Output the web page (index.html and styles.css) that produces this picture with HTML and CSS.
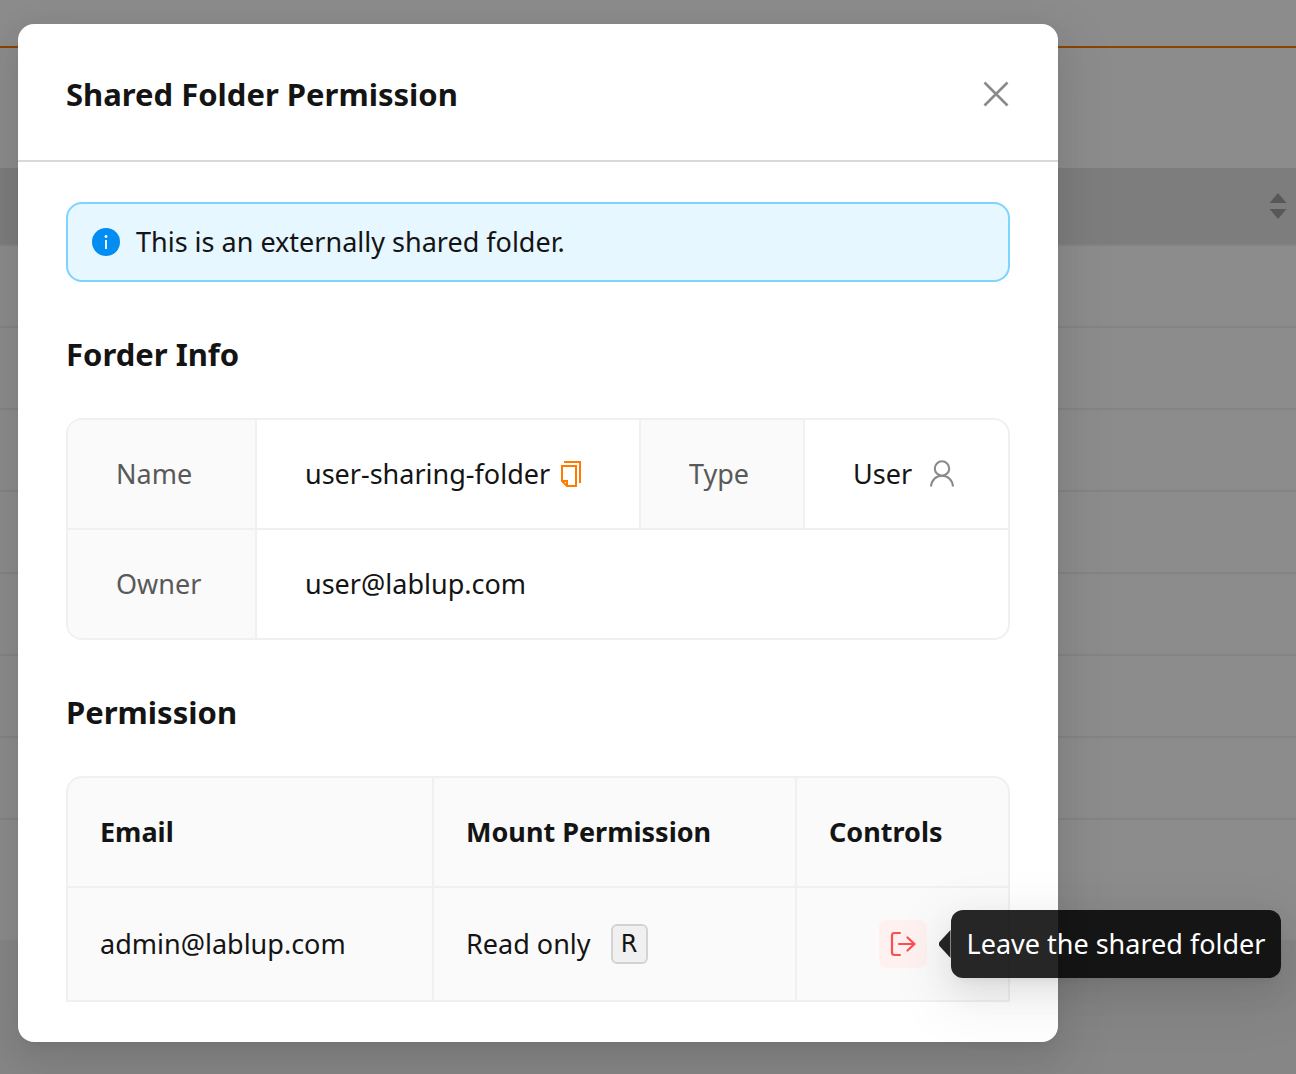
FILE: index.html
```html
<!DOCTYPE html>
<html lang="en">
<head>
<meta charset="utf-8">
<meta name="viewport" content="width=device-width, initial-scale=1">
<title>Shared Folder Permission</title>
<link rel="stylesheet" href="styles.css">
</head>
<body>
<div class="page" aria-hidden="true">
  <div class="page-tabs"></div>
  <div class="page-toolbar"></div>
  <div class="grid-head">
    <svg class="sorter" viewBox="0 0 18 26"><path d="M9 0 17.500 10H.5zM9 26 17.500 16H.5z" fill="#a0a0a0"/></svg>
  </div>
  <div class="grid-row"></div>
  <div class="grid-row"></div>
  <div class="grid-row"></div>
  <div class="grid-row"></div>
  <div class="grid-row"></div>
  <div class="grid-row"></div>
  <div class="grid-row"></div>
  <div class="grid-end"></div>
</div>
<div class="mask">
  <section class="modal" role="dialog" aria-labelledby="modal-title">
    <header class="modal-head">
      <h1 class="title" id="modal-title">Shared Folder Permission</h1>
      <button class="close" type="button" aria-label="Close">
        <svg viewBox="0 0 28 28" width="28" height="28"><path d="M2.500 2.500 25.500 25.500M25.500 2.500 2.500 25.500" fill="none" stroke="#8a8a8a" stroke-width="2.600"/></svg>
      </button>
    </header>
    <div class="modal-body">
      <div class="alert" role="alert">
        <svg viewBox="0 0 28 28" width="28" height="28"><circle cx="14" cy="14" r="14" fill="#028df2"/><circle cx="14" cy="8.500" r="1.400" fill="#fff"/><path d="M14 12v9" stroke="#fff" stroke-width="1.800"/></svg>
        <span>This is an externally shared folder.</span>
      </div>

      <h2 class="title section-title">Forder Info</h2>
      <div class="frame">
        <table class="info">
          <colgroup><col class="info-label"><col class="info-wide"><col class="info-label-2"><col></colgroup>
          <tr>
            <th scope="row">Name</th>
            <td><span class="inline name">user-sharing-folder
              <button class="copy" type="button" aria-label="Copy">
                <svg viewBox="0 0 22 28" width="22" height="28"><path d="M4 2H20V23" fill="none" stroke="#ff7a00" stroke-width="2"/><path d="M2 6H16V26H7L2 21z" fill="none" stroke="#ff7a00" stroke-width="2"/><path d="M2 21H7V26" fill="none" stroke="#ff7a00" stroke-width="2"/></svg>
              </button></span></td>
            <th scope="row">Type</th>
            <td><span class="inline user">User
              <svg viewBox="0 0 28 28" width="28" height="28"><g fill="none" stroke="#8a8a8a" stroke-width="2.100"><circle cx="14" cy="8.500" r="7.200"/><path d="M3 26.500C3.500 20 8 15.700 14 15.700S24.500 20 25 26.500"/></g></svg></span></td>
          </tr>
          <tr>
            <th scope="row">Owner</th>
            <td colspan="3">user@lablup.com</td>
          </tr>
        </table>
      </div>

      <h2 class="title section-title">Permission</h2>
      <div class="frame frame-open">
        <table class="perm">
          <colgroup><col class="perm-email"><col class="perm-mount"><col></colgroup>
          <thead>
            <tr><th scope="col">Email</th><th scope="col">Mount Permission</th><th scope="col">Controls</th></tr>
          </thead>
          <tbody>
            <tr>
              <td>admin@lablup.com</td>
              <td><span class="inline access">Read only <kbd class="key">R</kbd></span></td>
              <td>
                <div class="control">
                  <button class="leave" type="button" aria-label="Leave" aria-describedby="leave-tip">
                    <svg viewBox="0 0 26 26" width="26" height="26"><path d="M10 2H4.500Q2 2 2 4.500V21.500Q2 24 4.500 24H10M9 13H24.500M17.500 6.500 24.500 13 17.500 19.500" fill="none" stroke="#ff4d4f" stroke-width="2.200" stroke-linecap="round" stroke-linejoin="round"/></svg>
                  </button>
                  <div class="tip" id="leave-tip" role="tooltip">Leave the shared folder</div>
                </div>
              </td>
            </tr>
          </tbody>
        </table>
      </div>
    </div>
  </section>
</div>
</body>
</html>
```
FILE: styles.css
```css
* { box-sizing: border-box; }

body {
  margin: 0;
  min-height: 100vh;
  position: relative;
  overflow-x: hidden;
  font-family: "Noto Sans", "Open Sans", sans-serif;
  font-size: 27px;
  line-height: 44px;
  color: #141414;
  background: #f4f4f4;
}

button {
  display: flex;
  align-items: center;
  justify-content: center;
  padding: 0;
  border: 0;
  background: none;
  cursor: pointer;
}

svg { display: block; flex: none; }

/* Page behind the dialog */
.page {
  position: absolute;
  inset: 0;
  overflow: hidden;
}
.page-tabs { height: 48px; background: #fff; border-bottom: 2px solid #ff7a00; }
.page-toolbar { height: 120px; background: #fff; }
.grid-head {
  display: flex;
  align-items: center;
  justify-content: flex-end;
  height: 78px;
  padding-right: 9px;
  background: #e4e4e4;
  border-bottom: 2px solid #eee;
}
.sorter { width: 18px; height: 26px; }
.grid-row { height: 82px; background: #fff; border-bottom: 2px solid #f0f0f0; }
.grid-end { height: 120px; background: #fff; }

/* Dialog */
.mask {
  position: relative;
  min-height: 100vh;
  padding: 24px 18px 32px;
  background: rgba(0, 0, 0, .45);
}
.modal {
  max-width: 1040px;
  border-radius: 16px;
  background: #fff;
  box-shadow: 0 12px 32px rgba(0, 0, 0, .08), 0 6px 12px -8px rgba(0, 0, 0, .12), 0 18px 56px 16px rgba(0, 0, 0, .05);
}
.modal-head {
  display: flex;
  align-items: center;
  justify-content: space-between;
  height: 138px;
  padding: 4px 48px 0;
  border-bottom: 2px solid #d9d9d9;
}
.title {
  margin: 0;
  font-size: 31px;
  line-height: 40px;
  font-weight: 700;
}
.close { width: 28px; height: 28px; }
.modal-body { padding: 40px 48px; }

.alert {
  display: flex;
  align-items: center;
  gap: 16px;
  padding: 16px 24px;
  border: 2px solid #7cd4ff;
  border-radius: 16px;
  background: #e6f7ff;
}
.section-title { margin: 52px 0 44px; }

.frame {
  border: 2px solid #f0f0f0;
  border-radius: 16px;
  overflow: hidden;
}
.frame-open {
  border-radius: 16px 16px 0 0;
  background: #fafafa;
  overflow: visible;
}

table {
  width: 100%;
  table-layout: fixed;
  border-spacing: 0;
}
th, td {
  text-align: left;
  white-space: nowrap;
  border-right: 2px solid #f0f0f0;
}
th:last-child, td:last-child { border-right: 0; }

.info th, .info td { height: 108px; padding: 0 48px; }
.info tr:first-child > * { height: 110px; border-bottom: 2px solid #f0f0f0; }
.info th { font-weight: 400; color: #595959; background: #fafafa; }
.info-label { width: 189px; }
.info-wide { width: 384px; }
.info-label-2 { width: 164px; }

.perm th, .perm td { padding: 0 32px; }
.perm th { height: 110px; border-bottom: 2px solid #f0f0f0; }
.perm td { height: 112px; }
.perm-email { width: 366px; }
.perm-mount { width: 363px; }

.inline { display: flex; align-items: center; }
.name { gap: 10px; }
.user { gap: 16px; }
.access { gap: 20px; }
.copy { flex: none; }

.key {
  display: flex;
  align-items: center;
  justify-content: center;
  width: 37px;
  height: 40px;
  border: 2px solid #d3d3d3;
  border-radius: 6px;
  background: #f0f0f0;
  font: 24px/36px "DejaVu Sans", sans-serif;
}

.control {
  position: relative;
  width: 48px;
  margin: 0 auto;
}
.leave {
  width: 48px;
  height: 48px;
  border-radius: 8px;
  background: #fff1f0;
}
.tip {
  position: absolute;
  top: -10px;
  left: calc(100% + 24px);
  padding: 12px 16px;
  border-radius: 12px;
  background: rgba(0, 0, 0, .85);
  color: #fff;
  box-shadow: 0 12px 32px rgba(0, 0, 0, .08), 0 6px 12px -8px rgba(0, 0, 0, .12), 0 18px 56px 16px rgba(0, 0, 0, .05);
}
.tip::before {
  content: "";
  position: absolute;
  top: 50%;
  right: 100%;
  width: 12px;
  height: 28px;
  margin-top: -14px;
  background: rgba(0, 0, 0, .85);
  clip-path: polygon(100% 0, 8% 43%, 0 50%, 8% 57%, 100% 100%);
}
```
